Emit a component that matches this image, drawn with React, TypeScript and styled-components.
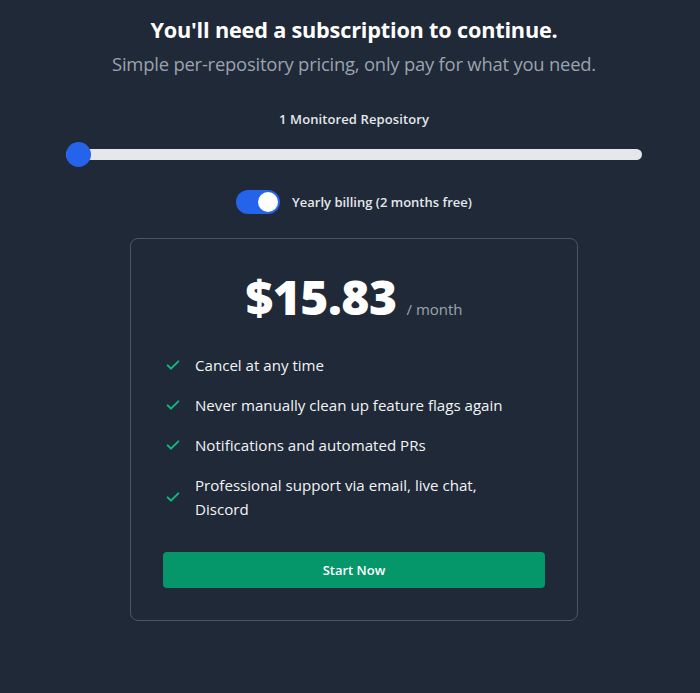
import React, { useState } from "react";
import styled, { createGlobalStyle } from "styled-components";

const Global = createGlobalStyle`
  html, body { margin: 0; padding: 0; background: #1f2937; }
  body { font-family: "Open Sans", "Noto Sans", sans-serif; color: #fff; }
  * { box-sizing: border-box; }
`;

const Page = styled.div`
  min-height: 693px;
  background: #1f2937;
  padding: 14px 58px 40px 66px;
  display: flex;
  flex-direction: column;
  align-items: center;
`;

const Title = styled.h1`
  margin: 0;
  font-size: 21.7px;
  font-weight: 700;
  line-height: 32px;
  color: #fff;
  letter-spacing: -0.2px;
`;

const Subtitle = styled.p`
  margin: 4px 0 0;
  font-size: 18.4px;
  line-height: 28px;
  color: #9ca3af;
  letter-spacing: -0.2px;
`;

const SliderLabel = styled.div`
  margin-top: 31px;
  font-size: 13px;
  font-weight: 600;
  line-height: 20px;
  color: #e5e7eb;
  letter-spacing: 0.1px;
`;

const SliderWrap = styled.div`
  margin-top: 13px;
  width: 100%;
  height: 24px;
  display: flex;
  align-items: center;
  position: relative;
`;

const Track = styled.div`
  width: 100%;
  height: 11px;
  border-radius: 6px;
  background: #e5e7eb;
`;

const Thumb = styled.div`
  position: absolute;
  top: 0;
  width: 25px;
  height: 25px;
  border-radius: 50%;
  background: #2563eb;
`;

const ToggleRow = styled.div`
  margin-top: 24px;
  display: flex;
  align-items: center;
  gap: 12px;
`;

const Switch = styled.button<{ $on: boolean }>`
  width: 44px;
  height: 24px;
  border-radius: 12px;
  border: none;
  padding: 2px;
  background: ${(p) => (p.$on ? "#2563eb" : "#4b5563")};
  display: flex;
  justify-content: ${(p) => (p.$on ? "flex-end" : "flex-start")};
  cursor: pointer;
`;

const Knob = styled.span`
  width: 20px;
  height: 20px;
  border-radius: 50%;
  background: #fff;
`;

const ToggleLabel = styled.span`
  font-size: 13px;
  font-weight: 600;
  color: #e5e7eb;
`;

const Card = styled.div`
  margin-top: 24px;
  width: 448px;
  border: 1px solid #4b5563;
  border-radius: 8px;
  padding: 26px 32px 32px;
  display: flex;
  flex-direction: column;
`;

const PriceRow = styled.div`
  display: flex;
  align-items: baseline;
  justify-content: center;
  gap: 10px;
`;

const Price = styled.span`
  font-size: 48px;
  font-weight: 800;
  line-height: 64px;
  color: #fff;
  letter-spacing: -0.5px;
`;

const Per = styled.span`
  font-size: 15px;
  color: #9ca3af;
`;

const Features = styled.ul`
  list-style: none;
  margin: 24px 0 0;
  padding: 0;
  display: flex;
  flex-direction: column;
  gap: 16px;
`;

const Feature = styled.li`
  display: flex;
  align-items: center;
  gap: 14px;
  padding-left: 2px;
`;

const FeatureText = styled.span`
  font-size: 15.1px;
  line-height: 24px;
  color: #f3f4f6;
  max-width: 320px;
`;

const Button = styled.button`
  margin-top: 31px;
  height: 36px;
  width: 100%;
  border: none;
  border-radius: 4px;
  background: #059669;
  color: #fff;
  font-family: inherit;
  font-size: 13px;
  font-weight: 600;
  cursor: pointer;
`;

const Check = () => (
  <svg width="16" height="16" viewBox="0 0 24 24" fill="none" stroke="#10b981" strokeWidth="3" strokeLinecap="round" strokeLinejoin="round" style={{ flexShrink: 0 }}>
    <path d="M4 12.5l5 5L20 6.5" />
  </svg>
);

const features = [
  "Cancel at any time",
  "Never manually clean up feature flags again",
  "Notifications and automated PRs",
  "Professional support via email, live chat, Discord",
];

export default function App() {
  const [yearly, setYearly] = useState(true);
  return (
    <Page>
      <Global />
      <Title>You'll need a subscription to continue.</Title>
      <Subtitle>Simple per-repository pricing, only pay for what you need.</Subtitle>
      <SliderLabel>1 Monitored Repository</SliderLabel>
      <SliderWrap>
        <Track />
        <Thumb style={{ left: 0 }} />
      </SliderWrap>
      <ToggleRow>
        <Switch $on={yearly} onClick={() => setYearly(!yearly)}>
          <Knob />
        </Switch>
        <ToggleLabel>Yearly billing (2 months free)</ToggleLabel>
      </ToggleRow>
      <Card>
        <PriceRow>
          <Price>$15.83</Price>
          <Per>/ month</Per>
        </PriceRow>
        <Features>
          {features.map((f) => (
            <Feature key={f}>
              <Check />
              <FeatureText>{f}</FeatureText>
            </Feature>
          ))}
        </Features>
        <Button>Start Now</Button>
      </Card>
    </Page>
  );
}
